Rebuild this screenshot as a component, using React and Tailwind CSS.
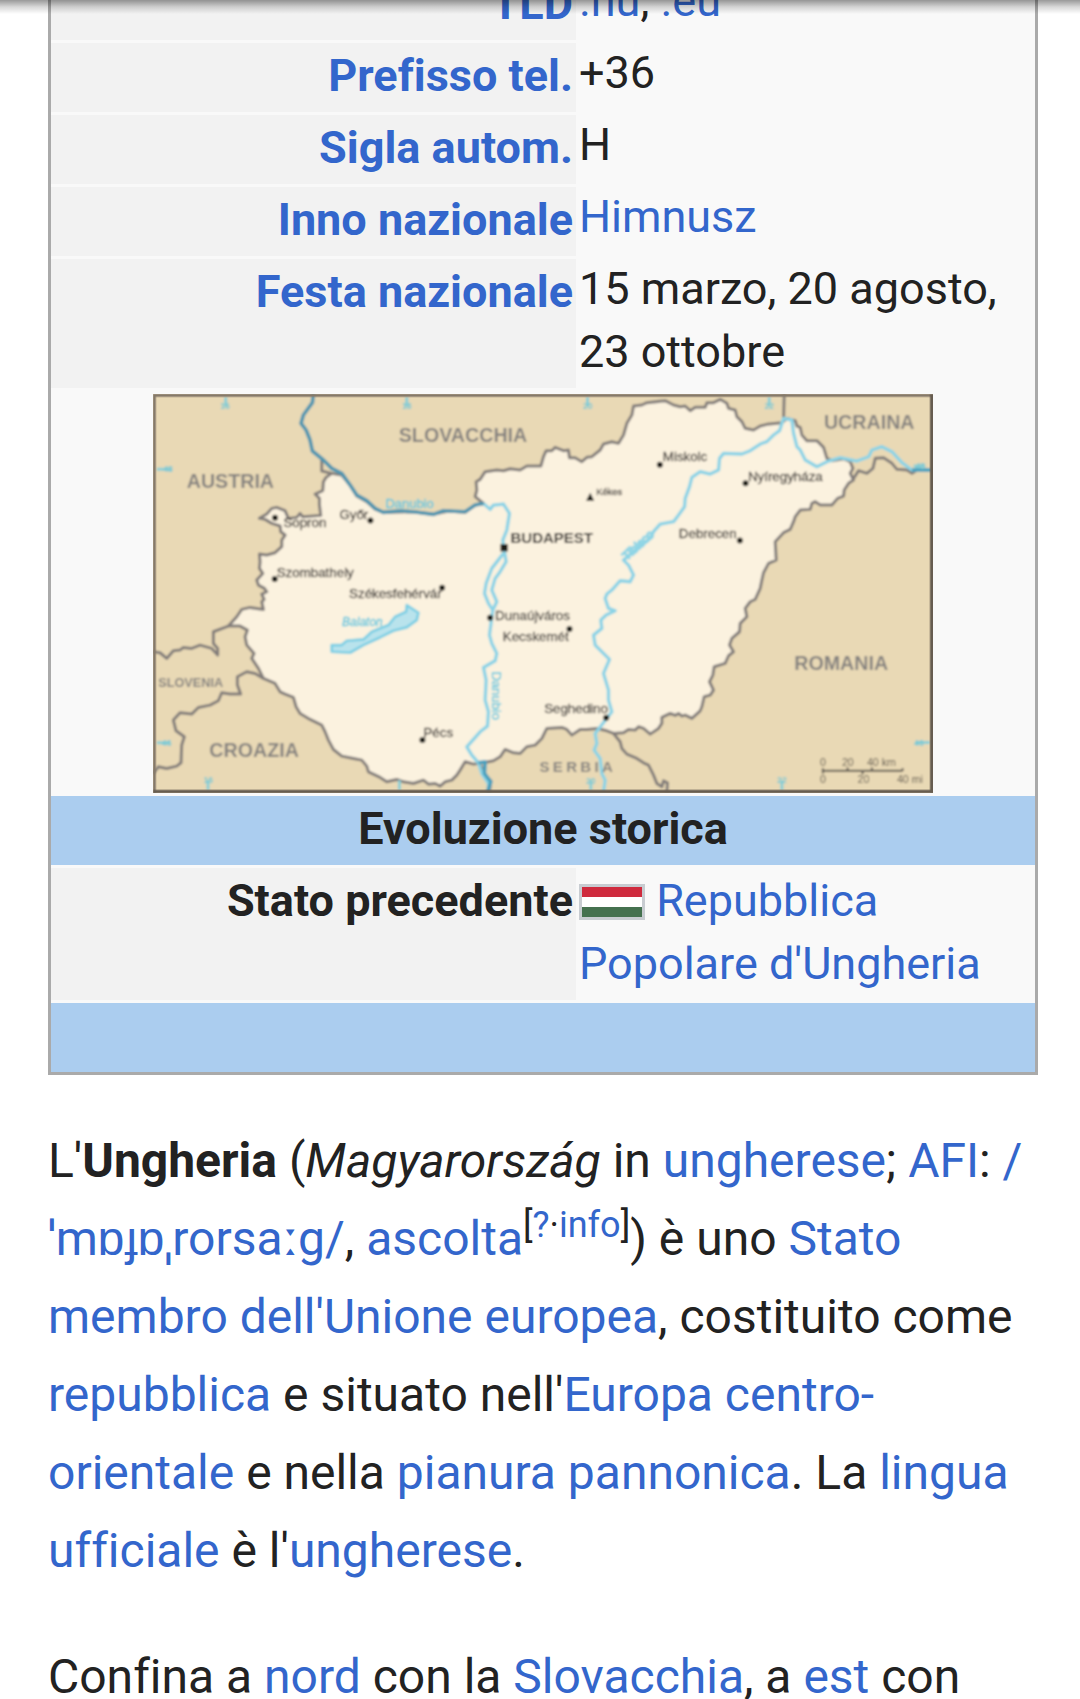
import React from "react";

const A = ({ children }) => (
  <a href="#" className="text-[#3366cc] no-underline">
    {children}
  </a>
);

const Row = ({ label, children }) => (
  <tr className="align-top">
    <th
      scope="row"
      className="w-[53.35%] border-t-3 border-[#f9f9f9] bg-[#f2f2f2] px-[3px] pt-px pb-[5px] text-right font-bold"
    >
      <A>{label}</A>
    </th>
    <td className="px-[3px] pt-px pb-[5px]">{children}</td>
  </tr>
);

const HUNGARY =
  "M545 250L575 255 600 285 620 318 650 335 675 357 700 367 790 365 850 373 895 363 945 367 975 345 1000 340 975 320 980 300 978 275 990 268 1005 245 1040 240 1060 242 1080 236 1110 240 1130 228 1172 228 1180 200 1188 182 1205 182 1215 172 1240 182 1255 180 1258 203 1275 203 1295 215 1310 202 1325 200 1350 180 1360 162 1385 155 1405 160 1420 135 1430 100 1445 75 1450 48 1475 45 1490 38 1545 32 1570 45 1590 50 1605 48 1620 62 1635 52 1665 52 1670 38 1690 38 1710 28 1730 40 1735 55 1755 60 1760 80 1775 95 1785 115 1810 120 1830 108 1850 103 1895 98 1910 85 1935 92 1940 108 1950 112 1955 135 1970 152 2000 152 2020 172 2030 205 2045 212 2080 206 2100 215 2108 235 2100 250 2110 270 2095 280 2082 300 2080 318 2062 325 2045 345 2010 345 1995 335 1985 340 1980 358 1950 360 1935 380 1930 395 1920 418 1900 428 1875 455 1878 510 1855 520 1840 548 1835 570 1830 595 1815 628 1800 635 1785 655 1790 680 1770 700 1768 725 1745 745 1738 765 1750 785 1735 797 1725 820 1692 830 1688 855 1678 875 1690 900 1680 915 1662 920 1655 950 1650 962 1625 985 1605 975 1595 978 1585 970 1575 976 1560 970 1535 982 1535 1000 1525 1015 1500 1032 1480 1015 1465 1010 1455 1020 1435 1018 1420 1028 1390 1030 1370 1022 1340 1015 1310 1018 1290 1018 1265 1035 1250 1018 1235 1012 1190 1015 1175 1045 1155 1065 1130 1070 1110 1090 1090 1088 1065 1078 1050 1100 1030 1112 1000 1118 970 1122 945 1115 930 1140 920 1155 905 1170 885 1175 870 1188 855 1180 835 1182 820 1170 790 1180 760 1175 740 1168 710 1175 690 1162 655 1145 650 1128 635 1110 610 1105 575 1098 550 1078 535 1050 525 1025 515 1005 480 988 450 970 438 950 430 922 405 912 390 905 375 880 340 865 325 835 305 805 312 790 290 765 285 740 292 720 270 708 235 708 260 680 275 658 300 652 340 658 335 635 342 628 335 612 350 605 343 595 325 585 320 570 338 550 328 535 330 515 328 492 350 495 375 488 395 470 395 450 405 435 392 425 390 408 365 400 345 388 328 385 350 372 365 355 380 352 405 362 415 385 440 382 450 370 458 380 512 376 508 345 508 325 495 312 518 302 520 275 528 262Z";

const NEIGHBOUR_BORDERS = [
  "M9 785L30 788 50 805 70 782 90 780 100 772 125 775 150 765 185 775 203 795 203 775 190 760 190 725 235 708",
  "M9 1150L25 1130 50 1135 80 1128 93 1118 95 1065 103 1040 78 1022 70 990 90 968 125 972 145 952 180 945 205 932 215 908 240 912 272 912 262 885 262 860 290 845 315 850 340 865",
  "M1390 1030L1410 1055 1415 1075 1430 1092 1460 1105 1480 1118 1495 1125 1510 1155 1520 1180 1535 1190 1540 1172 1552 1178 1550 1205",
  "M1902 12L1900 90",
  "M2110 265L2125 242 2150 250 2168 235 2175 205 2200 203 2225 220 2240 238 2270 240 2285 250 2300 240 2345 240",
  "M515 205L515 243 545 250",
  "M985 1118L1000 1140 1005 1155 1022 1172 1018 1205",
];

const DANUBE_BORDER =
  "M490 12L487 38 460 75 453 100 468 120 480 150 487 183 520 210 545 235 575 250 600 285 620 315 650 332 675 355 700 367 750 362 790 365 850 373 880 362 945 365 975 345 1000 340";

const RIVERS = [
  "M1000 340L1020 358 1030 345 1060 342 1078 370 1070 420 1058 450 1062 480 1068 515 1050 545 1035 565 1025 600 1040 635 1028 660 1018 735 1025 760 1040 790 1035 812 1000 832 1008 870 1005 930 1015 965 1012 1008 990 1025 950 1070 965 1095 985 1118 995 1150 1015 1180 1015 1205",
  "M1060 490L1025 535 1008 580 1003 610 1015 640 1028 660",
  "M2345 240L2285 240 2255 218 2225 185 2195 170 2165 180 2155 200 2120 213 2070 203 2030 215 2000 230 1965 210 1950 180 1940 170 1930 130 1925 90 1900 85 1888 122 1870 135 1850 155 1830 162 1800 182 1775 192 1720 190 1708 205 1705 240 1680 252 1650 245 1625 262 1618 290 1605 325 1603 350 1580 382 1570 395 1530 402 1510 425 1500 445 1420 510 1435 525 1450 555 1440 575 1410 572 1385 600 1370 612 1365 625 1375 655 1395 662 1368 675 1352 690 1355 715 1330 735 1335 765 1378 808 1360 850 1375 900 1375 930 1385 965 1358 1000 1335 1030 1340 1060 1332 1080 1350 1105 1355 1150 1365 1170 1360 1205",
];

const TICKS = [
  "M227 20V50M770 20V50M1312 20V50M1857 20V50",
  "M174 1170V1200M748 1170V1200M1322 1170V1200M1895 1170V1200",
  "M20 238H65M20 1058H60M2290 228H2325M2295 1057H2340",
];

const CITIES = [
  ["Sopron", 400, 412, 375, 383],
  ["Győr", 568, 386, 661, 391],
  ["Szombathely", 380, 562, 374, 567],
  ["Székesfehérvár", 597, 623, 876, 593],
  ["Dunaújváros", 1035, 691, 1020, 683],
  ["Kecskemét", 1058, 752, 1258, 717],
  ["Pécs", 820, 1040, 817, 1050],
  ["Miskolc", 1538, 214, 1529, 224],
  ["Nyíregyháza", 1793, 272, 1786, 280],
  ["Debrecen", 1586, 444, 1769, 451],
  ["Seghedino", 1182, 970, 1368, 983],
];

const COUNTRIES = [
  ["AUSTRIA", 110, 295],
  ["SLOVACCHIA", 746, 155],
  ["UCRAINA", 2021, 118],
  ["CROAZIA", 178, 1100],
  ["ROMANIA", 1932, 839],
];

function HungaryMap() {
  return (
    <svg
      viewBox="9 12 2340 1197"
      className="mx-auto block w-[79.3%]"
      role="img"
      aria-label="Ungheria - Mappa"
      fontFamily='"Liberation Sans", Arial, sans-serif'
    >
      <defs>
        <filter id="soft" x="0" y="0" width="1" height="1">
          <feGaussianBlur stdDeviation="3" />
        </filter>
      </defs>
      <rect x="9" y="12" width="2340" height="1197" fill="#e9d9b5" />
      <g filter="url(#soft)" strokeLinejoin="round">
        <rect x="9" y="12" width="2340" height="1197" fill="#e9d9b5" />
        <path d={HUNGARY} fill="#fbf2df" stroke="#827d7a" strokeWidth="9" />
        {NEIGHBOUR_BORDERS.map((d) => (
          <path key={d} d={d} fill="none" stroke="#827d7a" strokeWidth="9" />
        ))}
        {RIVERS.map((d) => (
          <path key={d} d={d} fill="none" stroke="#8ad3e6" strokeWidth="10" />
        ))}
        <path d={DANUBE_BORDER} fill="none" stroke="#5096b0" strokeWidth="11" />
        <path d="M985 1118L1005 1115 1003 1150 1022 1175 1012 1205M2285 240H2345" fill="none" stroke="#4aa0bd" strokeWidth="11" />
        <path
          d="M545 765L575 765 590 752 640 748 665 725 715 705 735 680 768 665 770 645 805 668 800 690 770 712 730 722 690 742 640 765 600 788 545 785Z"
          fill="#b9e3ec"
          stroke="#7ccfe4"
          strokeWidth="8"
        />
        {TICKS.map((d) => (
          <path key={d} d={d} fill="none" stroke="#8ccfd6" strokeWidth="9" />
        ))}
        <g fill="#78c8d3" fontSize="26" fontWeight="bold" textAnchor="middle">
          <text x="225" y="58">16</text>
          <text x="770" y="58">18</text>
          <text x="1313" y="58">20</text>
          <text x="1857" y="58">22</text>
          <text x="175" y="1178">16</text>
          <text x="1322" y="1182">20</text>
          <text x="1895" y="1180">22</text>
          <text x="54" y="247">48</text>
          <text x="50" y="1067">46</text>
          <text x="2310" y="237">48</text>
          <text x="2306" y="1067">46</text>
        </g>
        <g fill="#5cc6e0" stroke="#5cc6e0" strokeWidth="1" fontSize="39">
          <text x="706" y="354">Danubio</text>
          <text x="576" y="709" fontSize="36" fontStyle="italic">Balaton</text>
          <text transform="translate(1026 844) rotate(90)">Danubio</text>
          <text transform="translate(1430 512) rotate(-42)" fontSize="36" stroke="#8fd5e5" strokeWidth="5">Tibisco</text>
        </g>
        <g fill="#85827f" fontWeight="bold" fontSize="59">
          {COUNTRIES.map(([name, x, y]) => (
            <text key={name} x={x} y={y}>{name}</text>
          ))}
          <text x="25" y="890" fontSize="38">SLOVENIA</text>
          <text x="1168" y="1146" fontSize="45" className="tracking-[10px]">SERBIA</text>
        </g>
        <g fill="#4a4541" stroke="#4a4541" strokeWidth="1" fontSize="40">
          {CITIES.map(([name, x, y]) => (
            <text key={name} x={x} y={y}>{name}</text>
          ))}
          <text x="1338" y="316" fontSize="28">Kékes</text>
        </g>
        <g fill="#1c1a19">
          {CITIES.map(([name, , , cx, cy]) => (
            <circle key={name} cx={cx} cy={cy} r="9" />
          ))}
          <path d="M1308 332L1320 308 1332 332Z" />
          <rect x="1051" y="462" width="22" height="22" />
        </g>
        <text x="1081" y="460" fontSize="45" fontWeight="bold" fill="#332f2c">BUDAPEST</text>
        <path d="M2018 1134V1150M2018 1142H2257M2257 1134V1142M2092 1132V1142M2137 1142V1152M2165 1132V1142" fill="none" stroke="#6e675c" strokeWidth="7" />
        <g fill="#5e574d" fontSize="32">
          <text x="2009" y="1128">0</text>
          <text x="2075" y="1128">20</text>
          <text x="2150" y="1128">40 km</text>
          <text x="2009" y="1178">0</text>
          <text x="2122" y="1178">20</text>
          <text x="2240" y="1178">40 mi</text>
        </g>
      </g>
      <path d="M13 1209V16H2345V1209" fill="none" stroke="#85796a" strokeWidth="9" />
      <path d="M9 1204H2344V12" fill="none" stroke="#665c50" strokeWidth="10" />
    </svg>
  );
}

const Flag = () => (
  <svg viewBox="0 0 66 36" className="-mt-1 inline-block h-9 w-[66px] align-middle" role="img" aria-label="Bandiera dell'Ungheria">
    <rect width="66" height="36" fill="#c8ccd1" />
    <rect x="3" y="3" width="60" height="30" fill="#fff" />
    <rect x="3" y="3" width="60" height="10" fill="#cf2b3e" />
    <rect x="3" y="23" width="60" height="10" fill="#45714f" />
  </svg>
);

const Mark = ({ children }) => <span className='font-["Noto_Sans",sans-serif] leading-none'>{children}</span>;

export default function App() {
  return (
    <div className='relative h-screen overflow-hidden bg-white font-[Roboto,"Liberation_Sans",sans-serif] text-[#222222] [font-variant-ligatures:none]'>
      <div className="absolute inset-x-0 top-0 z-10 h-3.5 bg-linear-to-b from-black/40 via-black/15 to-transparent" />
      <main className="pr-[42px] pl-12">
        <table className="-mt-[35px] w-full table-fixed border-separate border-spacing-0 border-3 border-[#aaaaaa] bg-[#f9f9f9] text-[45px] leading-[63px]">
          <tbody>
            <Row label="TLD">
              <A>.hu</A>, <A>.eu</A>
            </Row>
            <Row label="Prefisso tel.">+36</Row>
            <Row label="Sigla autom.">H</Row>
            <Row label="Inno nazionale">
              <A>Himnusz</A>
            </Row>
            <Row label="Festa nazionale">15 marzo, 20 agosto, 23 ottobre</Row>
            <tr>
              <td colSpan={2} className="pt-1.5 pb-[3px]">
                <HungaryMap />
              </td>
            </tr>
            <tr>
              <th colSpan={2} className="bg-[#abcdef] pt-px pb-[5px] text-center font-bold">
                Evoluzione storica
              </th>
            </tr>
            <tr className="align-top">
              <th scope="row" className="border-t-3 border-[#f9f9f9] bg-[#f2f2f2] px-[3px] pt-px pb-[5px] text-right font-bold">
                Stato precedente
              </th>
              <td className="px-[3px] pt-1 pb-[5px]">
                <Flag /> <A>Repubblica Popolare d'Ungheria</A>
              </td>
            </tr>
            <tr>
              <td colSpan={2} className="h-18 border-t-3 border-[#f9f9f9] bg-[#abcdef]" />
            </tr>
          </tbody>
        </table>

        <div className="mt-[47px] flex flex-col gap-12 text-[48px] leading-[78px]">
          <p>
            L'<b className="font-bold">Ungheria</b> (<i>Magyarország</i> in <A>ungherese</A>; <A>AFI</A>:{" "}
            <A>
              /<wbr />
              <Mark>ˈ</Mark>mɒɟɒ<Mark>ˌ</Mark>rorsa<Mark>ː</Mark>g/
            </A>
            , <A>ascolta</A>
            <sup className="-top-[18px] align-baseline text-[36px] leading-none">
              [<A>?</A>·<A>info</A>]
            </sup>
            ) è uno <A>Stato membro dell'Unione europea</A>, costituito come <A>repubblica</A> e situato nell'
            <A>Europa centro-orientale</A> e nella <A>pianura pannonica</A>. La <A>lingua ufficiale</A> è l'
            <A>ungherese</A>.
          </p>
          <p>
            Confina a <A>nord</A> con la <A>Slovacchia</A>, a <A>est</A> con
          </p>
        </div>
      </main>
    </div>
  );
}
